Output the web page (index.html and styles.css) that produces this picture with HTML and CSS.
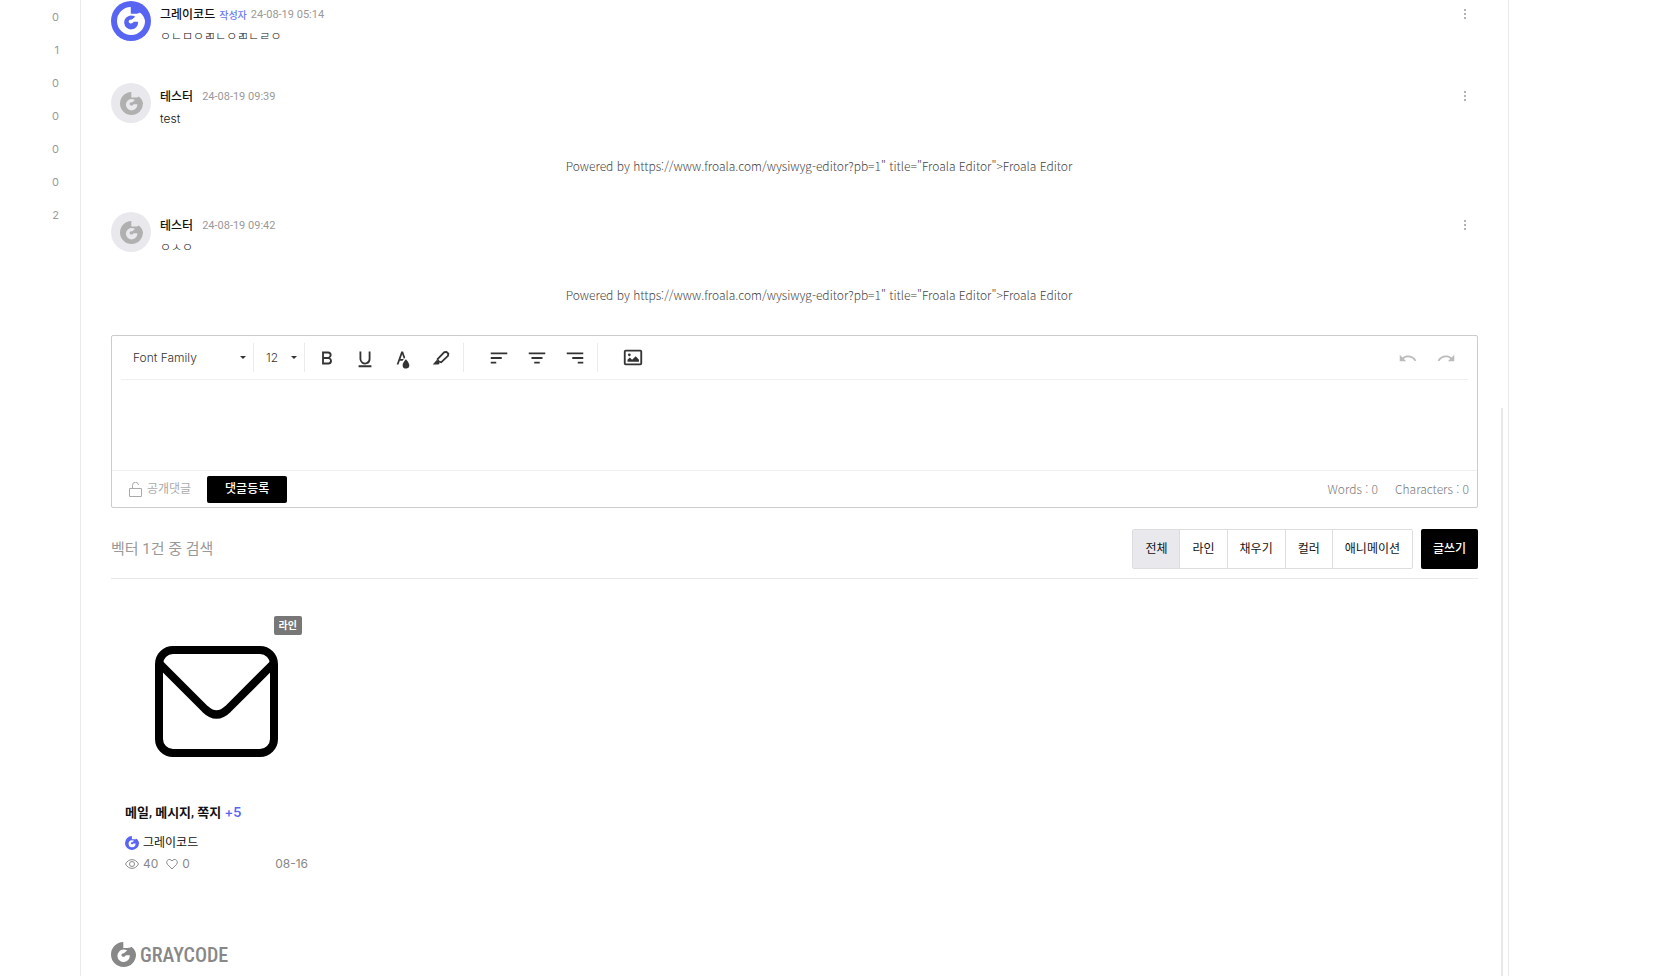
FILE: index.html
```
<!DOCTYPE html>
<html lang="ko">
<head>
  <meta charset="UTF-8">
  <meta name="viewport" content="width=device-width, initial-scale=1.0">
  <title>그레이코드 - 벡터</title>
  <link rel="stylesheet" href="styles.css">
</head>
<body>
  <svg width="0" height="0" class="defs" aria-hidden="true">
    <symbol id="logo" viewBox="0 0 25 25">
      <path fill-rule="evenodd" d="M12.3 0A12.5 12.5 0 1 0 25 12.2C24.6 9.500 23 6.600 20.400 4.800C19 6 17 6 12.300 6ZM12.300 7.600A6.200 6.200 0 1 0 18.800 13.200H14.800C13.900 15.200 11.200 15.200 10.400 13.400C10.400 11.800 11.700 11.100 13 11.300C14.200 10.500 15 9.300 16.400 8.600C15.200 7.900 13.800 7.600 12.300 7.600Z"/>
    </symbol>
    <symbol id="dots" viewBox="0 0 4 12">
      <circle cx="2" cy="2" r="1"/><circle cx="2" cy="6" r="1"/><circle cx="2" cy="10" r="1"/>
    </symbol>
  </svg>

  <div class="page">
    <aside class="sidebar">
      <ul class="counts">
        <li>0</li>
        <li>1</li>
        <li>0</li>
        <li>0</li>
        <li>0</li>
        <li>0</li>
        <li>2</li>
      </ul>
    </aside>

    <main class="content">
      <!-- 댓글 목록 -->
      <section class="comments">
        <article class="comment">
          <span class="avatar avatar-owner"><svg><use href="#logo"/></svg></span>
          <div class="comment-body">
            <div class="comment-head">
              <strong>그레이코드</strong><em>작성자</em><time>24-08-19 05:14</time>
            </div>
            <p>ㅇㄴㅁㅇㄻㄴㅇㄻㄴㄹㅇ</p>
          </div>
          <button class="more" aria-label="더보기"><svg><use href="#dots"/></svg></button>
        </article>
        <article class="comment">
          <span class="avatar"><svg><use href="#logo"/></svg></span>
          <div class="comment-body">
            <div class="comment-head">
              <strong>테스터</strong><time class="plain">24-08-19 09:39</time>
            </div>
            <p>test</p>
            <p class="powered">Powered by https://www.froala.com/wysiwyg-editor?pb=1" title="Froala Editor"&gt;Froala Editor</p>
          </div>
          <button class="more" aria-label="더보기"><svg><use href="#dots"/></svg></button>
        </article>
        <article class="comment">
          <span class="avatar"><svg><use href="#logo"/></svg></span>
          <div class="comment-body">
            <div class="comment-head">
              <strong>테스터</strong><time class="plain">24-08-19 09:42</time>
            </div>
            <p>ㅇㅅㅇ</p>
            <p class="powered">Powered by https://www.froala.com/wysiwyg-editor?pb=1" title="Froala Editor"&gt;Froala Editor</p>
          </div>
          <button class="more" aria-label="더보기"><svg><use href="#dots"/></svg></button>
        </article>
      </section>

      <!-- 댓글 에디터 -->
      <form class="editor">
        <div class="toolbar">
          <div class="group">
            <select class="font-family" aria-label="글꼴"><option>Font Family</option></select>
          </div>
          <div class="group">
            <select class="font-size" aria-label="글자 크기"><option>12</option></select>
          </div>
          <div class="group group-text">
            <button type="button" aria-label="굵게"><svg viewBox="0 0 24 24"><path d="M15.25,11.8h0A3.68,3.68,0,0,0,17,9a3.93,3.93,0,0,0-3.86-4H6.65V19h7a3.74,3.74,0,0,0,3.7-3.78V15.1A3.64,3.64,0,0,0,15.25,11.8ZM8.65,7h4.2a2.09,2.09,0,0,1,2,1.3,2.09,2.09,0,0,1-1.37,2.61,2.23,2.23,0,0,1-.63.09H8.65Zm4.6,10H8.65V13h4.6a2.09,2.09,0,0,1,2,1.3,2.09,2.09,0,0,1-1.37,2.61A2.23,2.23,0,0,1,13.25,17Z"/></svg></button>
            <button type="button" aria-label="밑줄"><svg viewBox="0 0 24 24"><path d="M19,20v2H5V20Zm-3-6.785a4,4,0,0,1-5.74,3.4A3.75,3.75,0,0,1,8,13.085V5.005H6v8.21a6,6,0,0,0,8,5.44,5.851,5.851,0,0,0,4-5.65v-8H16ZM16,5v0h2V5ZM8,5H6v0H8Z"/></svg></button>
            <button type="button" aria-label="글자색"><svg viewBox="0 0 24 24"><path d="M15.2,13.494s-3.6,3.9-3.6,6.3a3.65,3.65,0,0,0,7.3.1v-.1C18.9,17.394,15.2,13.494,15.2,13.494Zm-1.47-1.357.669-.724L12.1,5h-2l-5,14h2l1.43-4h2.943A24.426,24.426,0,0,1,13.726,12.137ZM11.1,7.8l1.86,5.2H9.244Z"/></svg></button>
            <button type="button" aria-label="배경색"><svg viewBox="0 0 24 24"><path d="M3 19l4.3-4.8 3.4 3.2L9.300 19Z"/><path class="line" d="M8.300 13.200L15.600 5.700L18 5.400L20 7.200L19.600 9.600L12.200 16.700L9.200 15.700Z"/></svg></button>
          </div>
          <div class="group group-align">
            <button type="button" aria-label="왼쪽 정렬"><svg viewBox="0 0 24 24"><path d="M3 6h18v2H3zM3 11h12v2H3zM3 16h6v2H3z"/></svg></button>
            <button type="button" aria-label="가운데 정렬"><svg viewBox="0 0 24 24"><path d="M3 6h18v2H3zM6 11h12v2H6zM9 16h6v2H9z"/></svg></button>
            <button type="button" aria-label="오른쪽 정렬"><svg viewBox="0 0 24 24"><path d="M3 6h18v2H3zM9 11h12v2H9zM15 16h6v2h-6z"/></svg></button>
          </div>
          <div class="group group-image">
            <button type="button" aria-label="이미지"><svg viewBox="0 0 24 24"><rect class="line" x="3" y="4" width="18" height="15" rx="1"/><circle cx="8" cy="8.500" r="1.500"/><path d="M6 16v-2l2.500-2.500L11 14l4-4 3.500 4v2z"/></svg></button>
          </div>
          <div class="group group-history">
            <button type="button" aria-label="실행 취소" disabled><svg viewBox="0 0 24 24"><path d="M10.4 9.400c-1.700.3-3.200.9-4.600 2L3 8.500v7h7l-2.700-2.700c3.700-2.600 8.800-1.800 11.500 1.900.2.3.4.5.5.8l1.800-.9C18.900 10.800 14.700 8.700 10.400 9.400z"/></svg></button>
            <button type="button" aria-label="다시 실행" disabled><svg viewBox="0 0 24 24"><path d="M13.600 9.400c1.700.3 3.200.9 4.600 2L21 8.500v7h-7l2.700-2.700C13 10.200 7.900 11 5.200 14.700c-.2.3-.4.5-.5.8l-1.800-.9C5.100 10.800 9.300 8.700 13.600 9.400z"/></svg></button>
          </div>
        </div>
        <textarea aria-label="댓글 내용"></textarea>
        <div class="editor-foot">
          <button type="button" class="lock">
            <svg viewBox="0 0 13 15"><path d="M.5 6.500h12v8H.500zM3.500 6.500V3.500a3 3 0 0 1 6-.5"/></svg>공개댓글
          </button>
          <button type="submit" class="submit">댓글등록</button>
          <span class="words">Words : 0</span>
          <span>Characters : 0</span>
        </div>
      </form>

      <!-- 게시판 -->
      <section class="board">
        <header class="board-head">
          <h2>벡터 1건 중 검색</h2>
          <nav class="filters">
            <button class="active">전체</button>
            <button>라인</button>
            <button>채우기</button>
            <button>컬러</button>
            <button>애니메이션</button>
          </nav>
          <button class="write">글쓰기</button>
        </header>
        <div class="cards">
          <article class="card">
            <div class="thumb">
              <span class="badge">라인</span>
              <svg viewBox="0 0 123 111"><rect x="4" y="4" width="115" height="103" rx="14"/><path d="M5 18L50 63Q61.500 74 73 63L118 18"/></svg>
            </div>
            <h3>메일, 메시지, 쪽지 <span>+5</span></h3>
            <div class="author"><svg><use href="#logo"/></svg>그레이코드</div>
            <div class="stats">
              <svg viewBox="0 0 14 14"><path d="M.5 7C3.500 1.200 10.500 1.200 13.500 7C10.500 12.800 3.500 12.800.5 7Z"/><circle cx="7" cy="7" r="2.500"/></svg>40
              <svg class="heart" viewBox="0 0 12 14"><path d="M6 12L1.400 7.300C-1 4 3.300.3 6 4C8.700.3 13 4 10.600 7.300Z"/></svg>0
              <time>08-16</time>
            </div>
          </article>
        </div>
      </section>

      <footer class="footer">
        <svg><use href="#logo"/></svg><span>GRAYCODE</span>
      </footer>
      <div class="scroll-thumb"></div>
    </main>
  </div>
</body>
</html>
```

FILE: styles.css
```
* {
  box-sizing: border-box;
}

body {
  margin: 0;
  font-family: Inter, "Noto Sans CJK KR", sans-serif;
  font-size: 12px;
  line-height: 20px;
  color: #111;
  background: #fff;
}

h2, h3, p, ul {
  margin: 0;
  padding: 0;
}

button, select, textarea {
  font: inherit;
  color: inherit;
  background: none;
  border: 0;
  padding: 0;
  margin: 0;
}

button {
  cursor: pointer;
}

svg {
  display: block;
  fill: currentColor;
}

.defs {
  position: absolute;
}

.page {
  display: grid;
  grid-template-columns: 80px 1fr 145px;
  min-height: 100vh;
}

.counts {
  list-style: none;
  padding: 1px 21px 0 0;
  text-align: right;
  font-size: 11px;
  line-height: 33px;
  color: #999;
}

.content {
  position: relative;
  padding: 0 30px;
  border: solid #e9e9ef;
  border-width: 0 1px;
}

/* 댓글 */
.comments {
  padding-top: 1px;
}

.comment {
  position: relative;
  display: flex;
  gap: 9px;
  height: 129px;
}

.comment:first-child {
  height: 82px;
}

.avatar {
  display: flex;
  align-items: center;
  justify-content: center;
  width: 40px;
  height: 40px;
  border-radius: 50%;
  background: #e9e9ed;
  color: #b0b0b0;
}

.avatar svg {
  width: 23px;
  height: 23px;
}

.avatar-owner {
  background: #5865f2;
  color: #fff;
}

.avatar-owner svg {
  width: 28px;
  height: 28px;
}

.comment-body {
  flex: 1;
  padding-top: 4px;
}

.comment-head {
  display: flex;
  margin-bottom: 2px;
}

.comment-head strong {
  font-weight: 500;
}

.comment-head em {
  margin-left: 4px;
  font-size: 10px;
  font-style: normal;
  font-weight: 500;
  color: #6b7cf5;
}

.comment-head time {
  margin-left: 4px;
  font-family: Roboto, sans-serif;
  font-size: 11px;
  color: #999;
}

.comment-head .plain {
  margin-left: 9px;
}

.comment p {
  font-weight: 300;
}

.comment .powered {
  margin-top: 27px;
  font-family: "Noto Sans CJK KR", sans-serif;
  text-align: center;
  color: #444;
}

.more {
  position: absolute;
  top: 7px;
  right: 11px;
  color: #999;
}

.more svg {
  width: 4px;
  height: 12px;
}

/* 에디터 */
.editor {
  margin-top: -6px;
  border: 1px solid #ccc;
  border-radius: 2px;
}

.toolbar {
  display: flex;
  align-items: center;
  height: 44px;
  margin: 0 9px;
  border-bottom: 1px solid #efefef;
  color: #333;
}

.group {
  display: flex;
  align-items: center;
  height: 29px;
  border-right: 1px solid #ebebeb;
}

.group button {
  display: flex;
  align-items: center;
  justify-content: center;
  width: 38px;
  height: 29px;
}

.group svg {
  width: 22px;
  height: 22px;
}

.group .line {
  fill: none;
  stroke: currentColor;
  stroke-width: 2;
}

.group select {
  appearance: none;
  height: 29px;
  padding-left: 12px;
  font-weight: 300;
  background: url("data:image/svg+xml,%3Csvg xmlns='http://www.w3.org/2000/svg' viewBox='0 0 6 3'%3E%3Cpath d='M0 0h6L3 3z' fill='%23333'/%3E%3C/svg%3E") no-repeat right 7px center / 6px 3px;
}

.font-family {
  width: 132px;
}

.font-size {
  width: 50px;
}

.group-text {
  width: 159px;
  padding-left: 3px;
}

.group-align {
  width: 134px;
  padding-left: 16px;
}

.group-image {
  padding-left: 16px;
  border: 0;
}

.group-history {
  margin-left: auto;
  padding-right: 3px;
  border: 0;
  color: #bbb;
}

textarea {
  display: block;
  width: 100%;
  height: 90px;
  padding: 10px 20px;
  resize: none;
  outline: 0;
}

.editor-foot {
  display: flex;
  align-items: center;
  height: 37px;
  padding: 0 8px 0 17px;
  border-top: 1px solid #efefef;
  color: #999;
}

.editor-foot span {
  font-family: "Noto Sans CJK KR", sans-serif;
  font-weight: 300;
  color: #777;
}

.lock {
  display: flex;
  align-items: center;
  gap: 5px;
  color: #aaa;
}

.lock svg {
  width: 13px;
  height: 15px;
  fill: none;
  stroke: #aaa;
}

.submit {
  width: 80px;
  height: 27px;
  margin-left: 16px;
  border-radius: 2px;
  background: #000;
  color: #fff;
  font-weight: 500;
}

.editor-foot .words {
  margin: 0 17px 0 auto;
}

/* 게시판 */
.board-head {
  display: flex;
  align-items: center;
  margin-top: 21px;
  padding-bottom: 9px;
  border-bottom: 1px solid #e9e9ed;
}

.board-head h2 {
  margin-right: auto;
  font-family: Roboto, "Noto Sans CJK KR", sans-serif;
  font-size: 15px;
  font-weight: 400;
  color: #999;
}

.filters {
  display: flex;
  height: 40px;
  border: 1px solid #ddd;
  border-radius: 2px;
}

.filters button {
  padding: 0 12px;
  border-left: 1px solid #ddd;
}

.filters button:first-child {
  border-left: 0;
}

.filters .active {
  background: #e9e9ed;
}

.write {
  width: 57px;
  height: 40px;
  margin-left: 8px;
  border-radius: 2px;
  background: #000;
  color: #fff;
  font-weight: 500;
}

.cards {
  display: grid;
  grid-template-columns: repeat(auto-fill, 211px);
  padding-top: 31px;
}

.card {
  padding: 0 14px;
}

.thumb {
  position: relative;
  display: flex;
  align-items: center;
  justify-content: center;
  height: 183px;
}

.thumb svg {
  width: 123px;
  height: 111px;
  fill: none;
  stroke: #000;
  stroke-width: 8;
}

.badge {
  position: absolute;
  top: 6px;
  right: 6px;
  padding: 0 5px;
  border-radius: 2px;
  background: #777;
  color: #fff;
  font-size: 10px;
  font-weight: 700;
  line-height: 19px;
}

.card h3 {
  margin-top: 9px;
  font-family: Roboto, "Noto Sans CJK KR", sans-serif;
  font-size: 13px;
  font-weight: 600;
}

.card h3 span {
  font-family: Inter, sans-serif;
  color: #5865f2;
}

.author {
  display: flex;
  align-items: center;
  gap: 4px;
  margin-top: 10px;
}

.author svg {
  width: 14px;
  height: 14px;
  color: #5865f2;
}

.stats {
  display: flex;
  align-items: center;
  gap: 4px;
  margin-top: 1px;
  color: #888;
}

.stats svg {
  width: 14px;
  height: 14px;
  fill: none;
  stroke: #888;
}

.stats .heart {
  width: 12px;
  margin-left: 4px;
}

.stats time {
  margin-left: auto;
}

.footer {
  display: flex;
  align-items: center;
  gap: 4px;
  margin-top: 68px;
  color: #888;
}

.footer svg {
  width: 25px;
  height: 25px;
}

.footer span {
  font-family: "Roboto Condensed", "Liberation Sans Narrow", sans-serif;
  font-size: 20px;
  font-weight: 500;
}

/* 스크롤바 */
.scroll-thumb {
  position: absolute;
  top: 408px;
  right: 5px;
  bottom: 0;
  width: 2px;
  background: #e9e9ed;
}
```
